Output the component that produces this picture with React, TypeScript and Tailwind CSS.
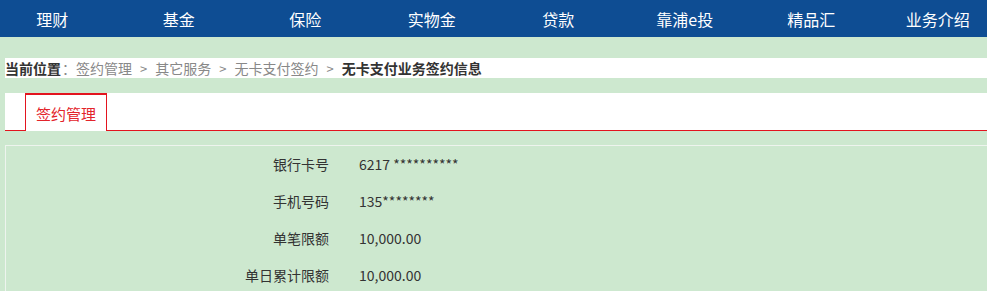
const navItems = ['理财', '基金', '保险', '实物金', '贷款', '靠浦e投', '精品汇', '业务介绍'];

const crumbs = ['签约管理', '其它服务', '无卡支付签约'];

const rows = [
  { label: '银行卡号', value: '6217 **********' },
  { label: '手机号码', value: '135********' },
  { label: '单笔限额', value: '10,000.00' },
  { label: '单日累计限额', value: '10,000.00' },
];

export default function App() {
  return (
    <div
      className="min-h-[291px] w-full overflow-hidden bg-[#cde8cf]"
      style={{ fontFamily: '"Noto Sans CJK SC", "Microsoft YaHei", sans-serif' }}
    >
      <div className="h-[37px] bg-[#0e4d93]">
        <ul className="ml-[-11px] flex h-full items-center">
          {navItems.map((item) => (
            <li key={item} className="w-[126.5px] shrink-0 text-center text-[16px] text-white">
              {item}
            </li>
          ))}
        </ul>
      </div>

      <div className="mt-[21px] ml-[5px] flex h-[20px] items-center bg-white text-[14px] leading-none">
        <span className="font-bold text-[#333]">当前位置</span>
        <span className="ml-[1px] text-[#888]">：</span>
        {crumbs.map((c) => (
          <span key={c} className="text-[#888]">
            {c}
            <span className="mx-[8px] text-[13px]">&gt;</span>
          </span>
        ))}
        <span className="font-bold text-[#333]">无卡支付业务签约信息</span>
      </div>

      <div className="mt-[15px] ml-[5px] flex h-[38px] items-end border-b border-[#e3141f] bg-white">
        <div className="mb-[-1px] ml-[20px] flex h-[38px] w-[82px] items-center justify-center border-x border-t-2 border-[#e3141f] bg-white pt-[3px] text-[15px] text-[#e3242b]">
          签约管理
        </div>
      </div>

      <div className="mt-[14px] ml-[5px] border-t border-l border-[#eef4ee]">
        <table className="text-[14px] text-[#333]">
          <tbody>
            {rows.map((r) => (
              <tr key={r.label} className="h-[37px]">
                <td className="w-[323px] text-right">{r.label}</td>
                <td className="pl-[30px]">{r.value}</td>
              </tr>
            ))}
          </tbody>
        </table>
      </div>
    </div>
  );
}
